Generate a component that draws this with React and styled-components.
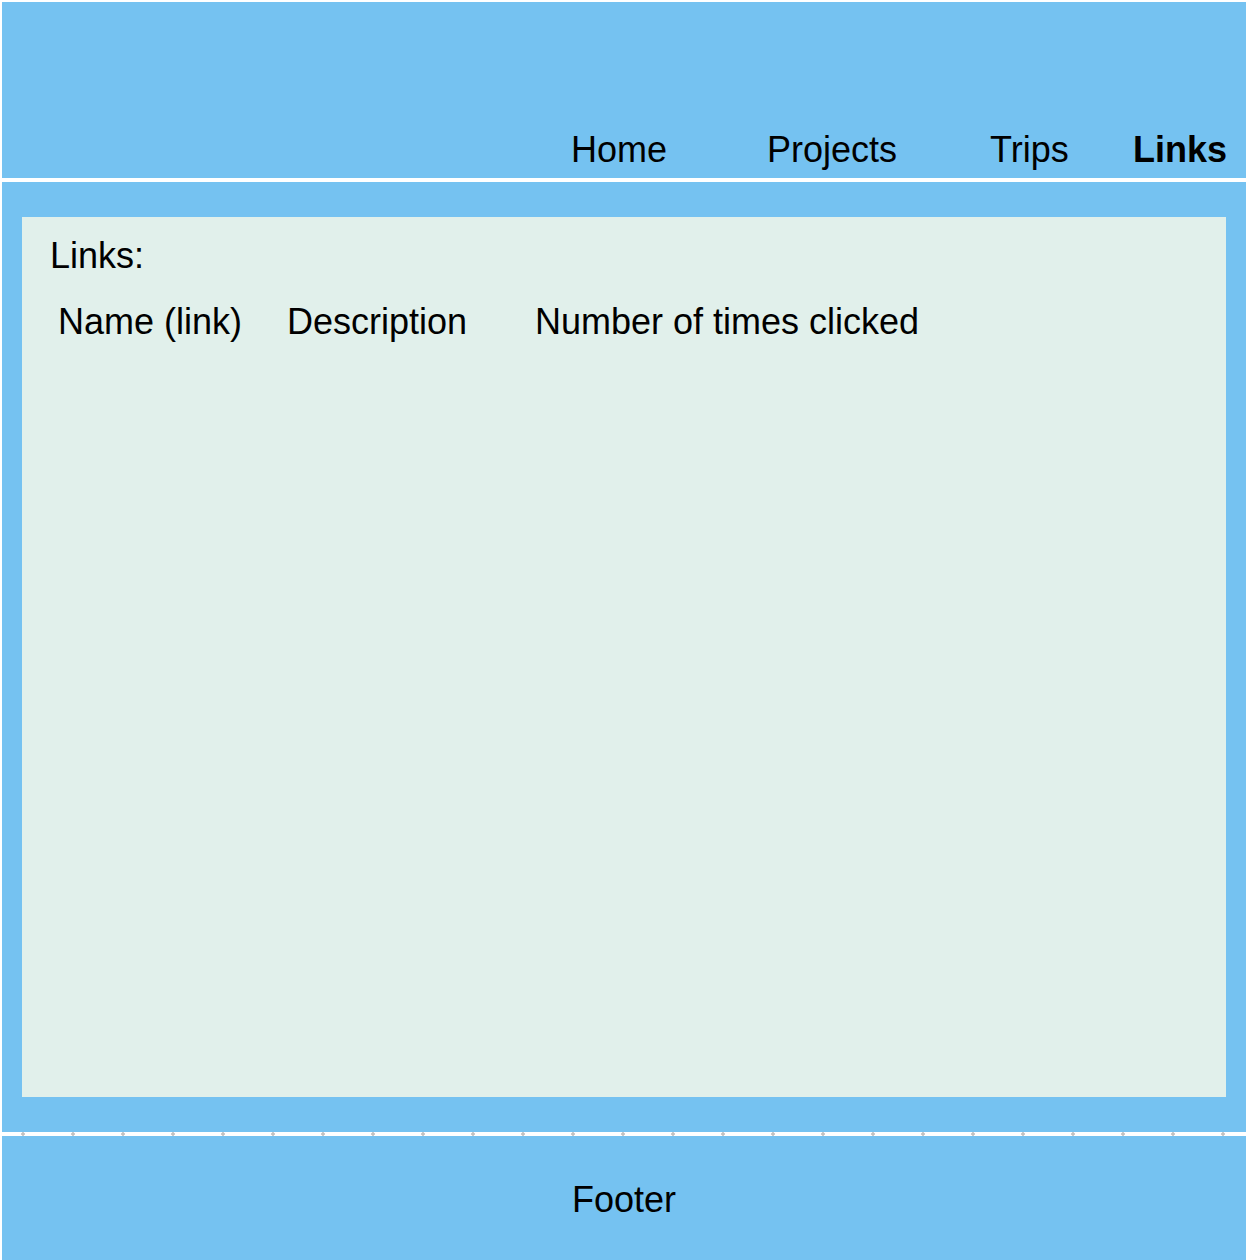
import React from 'react';
import styled, { createGlobalStyle } from 'styled-components';

const GlobalStyle = createGlobalStyle`
  body {
    margin: 0;
    background: #ffffff;
    font-family: "Liberation Sans", Arial, sans-serif;
    color: #000;
  }
`

const Page = styled.div`
  display: flex;
  flex-direction: column;
  padding: 2px 4px 0 2px;
  background: #ffffff;
`

const Header = styled.header`
  height: 176px;
  box-sizing: border-box;
  display: flex;
  align-items: flex-end;
  justify-content: flex-end;
  padding: 0 0 8px 0;
  background-color: #75c2f1;
`

const Nav = styled.nav`
  display: flex;
  font-size: 36px;
  line-height: 41px;
`

const NavItem = styled.a`
  display: block;
  width: ${p => p.$w}px;
  font-weight: ${p => (p.$active ? 700 : 400)};
  color: #000;
  text-decoration: none;
`

const Separator = styled.div`
  height: 4px;
  background-color: #ffffff;
  background-image: ${p =>
    p.$dotted ? 'radial-gradient(circle, #c2c2c2 1.5px, transparent 2px)' : 'none'};
  background-size: 50px 4px;
  background-position: -4px 0;
  background-repeat: repeat-x;
`

const Main = styled.main`
  padding: 35px 20px;
  background-color: #75c2f1;
`

const ContentBox = styled.section`
  height: 880px;
  box-sizing: border-box;
  padding: 18px 28px;
  background-color: #e1f0eb;
  font-size: 36px;
  line-height: 41px;
`

const Title = styled.div`
  margin-bottom: 25px;
`

const TableRow = styled.div`
  display: flex;
  padding-left: 8px;
`

const Cell = styled.div`
  width: ${p => (p.$w ? `${p.$w}px` : 'auto')};
  flex: ${p => (p.$w ? 'none' : '1')};
`

const Footer = styled.footer`
  height: 124px;
  box-sizing: border-box;
  padding-top: 43px;
  text-align: center;
  font-size: 36px;
  line-height: 41px;
  background-color: #75c2f1;
`

export default function App() {
  return (
    <>
      <GlobalStyle />
      <Page>
        <Header>
          <Nav>
            <NavItem $w={196}>Home</NavItem>
            <NavItem $w={223}>Projects</NavItem>
            <NavItem $w={143}>Trips</NavItem>
            <NavItem $w={113} $active>Links</NavItem>
          </Nav>
        </Header>
        <Separator />
        <Main>
          <ContentBox>
            <Title>Links:</Title>
            <TableRow>
              <Cell $w={229}>Name (link)</Cell>
              <Cell $w={248}>Description</Cell>
              <Cell>Number of times clicked</Cell>
            </TableRow>
          </ContentBox>
        </Main>
        <Separator $dotted />
        <Footer>Footer</Footer>
      </Page>
    </>
  );
}
